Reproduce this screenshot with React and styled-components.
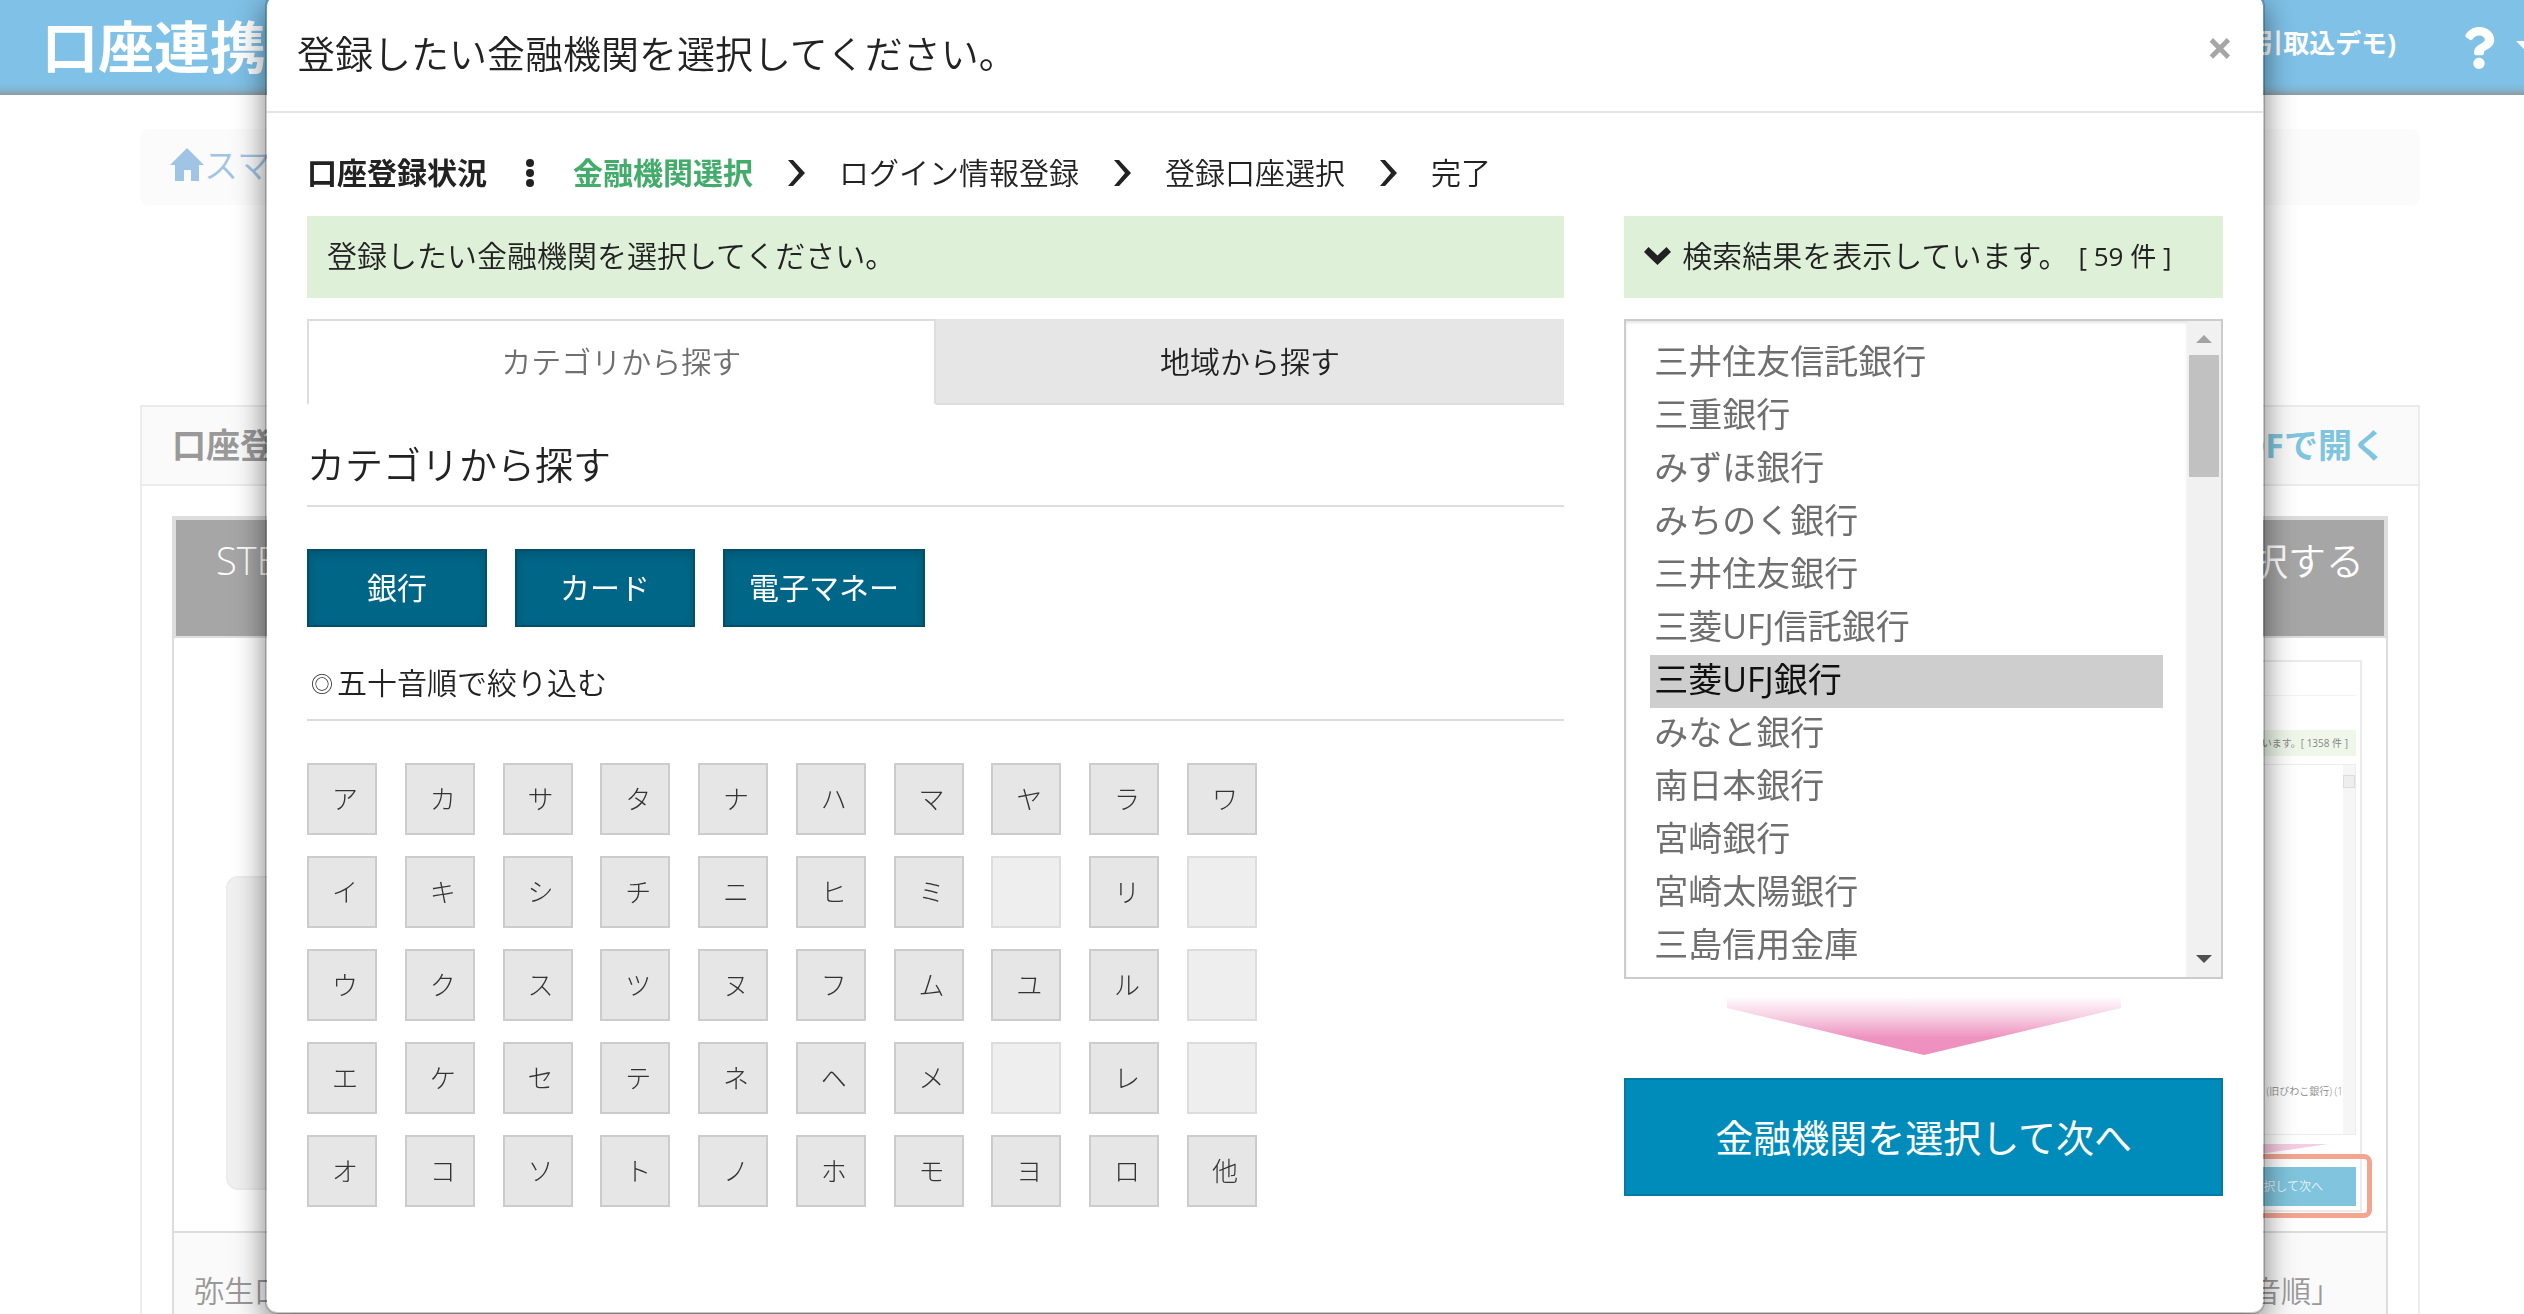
import styled, { createGlobalStyle } from 'styled-components';
import { FaQuestion } from 'react-icons/fa';

const kanaRows = [
  ['ア', 'カ', 'サ', 'タ', 'ナ', 'ハ', 'マ', 'ヤ', 'ラ', 'ワ'],
  ['イ', 'キ', 'シ', 'チ', 'ニ', 'ヒ', 'ミ', '', 'リ', ''],
  ['ウ', 'ク', 'ス', 'ツ', 'ヌ', 'フ', 'ム', 'ユ', 'ル', ''],
  ['エ', 'ケ', 'セ', 'テ', 'ネ', 'ヘ', 'メ', '', 'レ', ''],
  ['オ', 'コ', 'ソ', 'ト', 'ノ', 'ホ', 'モ', 'ヨ', 'ロ', '他'],
];

const banks = [
  '三井住友信託銀行',
  '三重銀行',
  'みずほ銀行',
  'みちのく銀行',
  '三井住友銀行',
  '三菱UFJ信託銀行',
  '三菱UFJ銀行',
  'みなと銀行',
  '南日本銀行',
  '宮崎銀行',
  '宮崎太陽銀行',
  '三島信用金庫',
];

const StepArrow = () => (
  <StepMark>
    <svg width="18" height="28" viewBox="0 0 18 28" fill="#222">
      <path d="M1 1 H6 L18 14 L6 27 H1 L12 14 Z" />
    </svg>
  </StepMark>
);

const Backdrop = () => (
  <Page>
    <TopBar>
      <Logo>口座連携</Logo>
      <TopMenu>
        <UserName>引取込デモ)</UserName>
        <FaQuestion size={42} />
        <Caret />
      </TopMenu>
    </TopBar>
    <Content>
      <Breadcrumb>
        <HomeLink href="#home">
          <svg width="34" height="34" viewBox="0 0 34 34" fill="currentColor">
            <path d="M17 0 L34 17 H29 V33 H21 V22 H14 V33 H5 V17 H0 Z" />
          </svg>
          スマ
        </HomeLink>
      </Breadcrumb>
      <Panel>
        <PanelHead>
          <span>口座登</span>
          <a href="#pdf">PDFで開く</a>
        </PanelHead>
        <StepCard>
          <StepHead>
            <span>STEP</span>
            <span>択する</span>
          </StepHead>
          <StepBody>
            <PlainShot />
            <Shot>
              <ShotHead />
              <ShotBanner>しています。[ 1358 件 ]</ShotBanner>
              <ShotList>
                <ShotListText>(旧びわこ銀行) (1</ShotListText>
                <ShotScroll />
              </ShotList>
              <svg width="218" height="12" viewBox="0 0 218 12">
                <path d="M40 1 H190 L115 12 Z" fill="#f6cde2" />
              </svg>
              <ShotButton>選択して次へ</ShotButton>
              <ShotRing />
            </Shot>
          </StepBody>
          <StepFoot>
            <span>弥生口</span>
            <span>音順」</span>
          </StepFoot>
        </StepCard>
      </Panel>
    </Content>
  </Page>
);

const App = () => {
  return (
    <>
      <GlobalStyle />
      <Backdrop />
      <Overlay>
        <Modal role="dialog" aria-labelledby="modal-title">
          <ModalHead>
            <Title id="modal-title">登録したい金融機関を選択してください。</Title>
            <Close aria-label="閉じる">×</Close>
          </ModalHead>
          <ModalBody>
            <Steps>
              <Step $bold>口座登録状況</Step>
              <StepMark>
                <svg width="8" height="28" viewBox="0 0 8 28" fill="#222">
                  <circle cx="4" cy="4" r="4" />
                  <circle cx="4" cy="14" r="4" />
                  <circle cx="4" cy="24" r="4" />
                </svg>
              </StepMark>
              <Step $bold $current>金融機関選択</Step>
              <StepArrow />
              <Step>ログイン情報登録</Step>
              <StepArrow />
              <Step>登録口座選択</Step>
              <StepArrow />
              <Step>完了</Step>
            </Steps>
            <Columns>
              <div>
                <Banner>登録したい金融機関を選択してください。</Banner>
                <Tabs>
                  <Tab $active>カテゴリから探す</Tab>
                  <Tab>地域から探す</Tab>
                </Tabs>
                <Heading>カテゴリから探す</Heading>
                <Categories>
                  <CategoryButton>銀行</CategoryButton>
                  <CategoryButton>カード</CategoryButton>
                  <CategoryButton>電子マネー</CategoryButton>
                </Categories>
                <SubHeading>
                  <Bullet>◎</Bullet>五十音順で絞り込む
                </SubHeading>
                <KanaGrid>
                  {kanaRows.flat().map((kana, i) => (
                    <KanaButton key={i} disabled={!kana}>{kana}</KanaButton>
                  ))}
                </KanaGrid>
              </div>
              <div>
                <Banner as="label" htmlFor="bank-list">
                  <svg width="27" height="18" viewBox="0 0 27 18" fill="#222">
                    <path d="M4.500 0 L13.500 8.500 L22.500 0 L27 5 L13.500 18 L0 5 Z" />
                  </svg>
                  <span>検索結果を表示しています。</span>
                  <Count>[ 59 件 ]</Count>
                </Banner>
                <ListBox>
                  <BankSelect id="bank-list" size={12} defaultValue="三菱UFJ銀行">
                    {banks.map((bank) => (
                      <option key={bank} value={bank}>{bank}</option>
                    ))}
                  </BankSelect>
                  <ScrollBar>
                    <ScrollUp />
                    <ScrollThumb />
                    <ScrollDown />
                  </ScrollBar>
                </ListBox>
                <PinkArrow width="394" height="57" viewBox="0 0 394 57">
                  <defs>
                    <linearGradient id="pink" x1="0" y1="0" x2="0" y2="1">
                      <stop offset="0" stopColor="#fffafc" />
                      <stop offset="0.3" stopColor="#f7d3e4" />
                      <stop offset="0.7" stopColor="#ee92c0" />
                      <stop offset="1" stopColor="#ee8fbf" />
                    </linearGradient>
                  </defs>
                  <path d="M0 0 H394 V10 L197 57 L0 10 Z" fill="url(#pink)" />
                </PinkArrow>
                <NextButton>金融機関を選択して次へ</NextButton>
              </div>
            </Columns>
          </ModalBody>
        </Modal>
      </Overlay>
    </>
  );
};

const GlobalStyle = createGlobalStyle`
  * {
    box-sizing: border-box;
  }
  body {
    margin: 0;
    background: #fff;
    color: #222;
    font-family: "Open Sans", "Noto Sans CJK JP", sans-serif;
    font-size: 30px;
    font-weight: 350;
    line-height: 40px;
  }
  button, select {
    font-family: inherit;
    font-weight: inherit;
  }
  svg {
    display: block;
    flex: none;
  }
`;

/* page behind the dialog */
const Page = styled.div`
  height: 100vh;
  overflow: hidden;
`;

const TopBar = styled.header`
  display: flex;
  justify-content: space-between;
  height: 95px;
  padding-left: 42px;
  overflow: hidden;
  color: #fff;
  background: linear-gradient(to bottom, #7fc1e7 84px, #84b4d0 90px, #8e9ba3 95px);
`;

const Logo = styled.div`
  font-size: 56px;
  font-weight: 700;
  line-height: 92px;
`;

const TopMenu = styled.div`
  display: flex;
  align-items: center;
  margin-right: -12px;
`;

const UserName = styled.span`
  margin: 0 62px 10px 0;
  font-size: 26px;
  font-weight: 700;
`;

const Caret = styled.span`
  margin: 0 0 4px 16px;
  border: 10px solid transparent;
  border-top-color: #fff;
  border-bottom: 0;
`;

const Content = styled.main`
  padding: 34px 104px 0 140px;
`;

const Breadcrumb = styled.nav`
  height: 76px;
  margin-bottom: 200px;
  padding: 16px 30px;
  border-radius: 8px;
  background: #fbfbfb;
`;

const HomeLink = styled.a`
  display: flex;
  align-items: center;
  color: #a0c4e6;
  font-size: 34px;
  text-decoration: none;
`;

const Panel = styled.section`
  border: 2px solid #ececec;
`;

const PanelHead = styled.div`
  display: flex;
  justify-content: space-between;
  height: 79px;
  padding: 18px 32px 0 30px;
  border-bottom: 2px solid #ececec;
  background: #fafafa;
  color: #999;
  font-size: 34px;
  font-weight: 700;

  a {
    color: #7fc5dd;
    text-decoration: none;
  }
`;

const StepCard = styled.div`
  margin: 30px;
  border: 2px solid #ddd;
`;

const StepHead = styled.div`
  display: flex;
  justify-content: space-between;
  height: 120px;
  padding: 20px 20px 0 40px;
  border: 2px solid #ddd;
  background: #a6a6a6;
  color: #fff;
  font-size: 38px;
`;

const StepBody = styled.div`
  display: flex;
  justify-content: space-between;
  align-items: flex-start;
  height: 593px;
  padding: 22px 24px 0 52px;
`;

const PlainShot = styled.div`
  width: 800px;
  height: 314px;
  margin-top: 216px;
  border: 2px solid #ececec;
  border-radius: 12px;
  background: #f1f1f1;
`;

const Shot = styled.div`
  position: relative;
  display: flex;
  flex-direction: column;
  width: 226px;
  height: 552px;
  padding-right: 4px;
  border: 2px solid #ebebeb;
  color: #888;
  font-size: 10px;
  line-height: 26px;
`;

const ShotHead = styled.div`
  height: 34px;
  margin-bottom: 34px;
  border-bottom: 1px solid #f3f3f3;
`;

const ShotBanner = styled.div`
  height: 26px;
  margin-bottom: 8px;
  padding-right: 8px;
  background: #eef7ea;
  font-weight: 400;
  text-align: right;
`;

const ShotList = styled.div`
  display: flex;
  align-items: stretch;
  height: 371px;
  margin-bottom: 8px;
  border: 1px solid #ececec;
`;

const ShotListText = styled.div`
  flex: 1;
  align-self: flex-end;
  padding-bottom: 30px;
  text-align: right;
`;

const ShotScroll = styled.div`
  width: 12px;
  padding-top: 10px;
  background: #f6f6f6;

  &::before {
    content: '';
    display: block;
    height: 11px;
    border: 1px solid #ddd;
    background: #eee;
  }
`;

const ShotButton = styled.div`
  height: 39px;
  margin-top: 12px;
  padding-right: 33px;
  background: #80c5dd;
  color: #e6f4f9;
  font-size: 12px;
  line-height: 39px;
  text-align: right;
`;

const ShotRing = styled.div`
  position: absolute;
  right: -12px;
  bottom: -8px;
  width: 220px;
  height: 64px;
  border: 5px solid #f4a590;
  border-radius: 8px;
`;

const StepFoot = styled.div`
  display: flex;
  justify-content: space-between;
  padding: 38px 45px 60px 20px;
  border-top: 2px solid #ddd;
  background: #fafafa;
  color: #999;
`;

/* dialog, scrolled a little past its top edge */
const Overlay = styled.div`
  position: fixed;
  inset: -6px 0 0;
  padding: 0 259px 0 265px;
  overflow: hidden;
`;

const Modal = styled.div`
  border: 2px solid rgba(0, 0, 0, 0.2);
  border-radius: 12px;
  background: #fff;
  background-clip: padding-box;
  box-shadow: 0 10px 30px rgba(0, 0, 0, 0.5);
`;

const ModalHead = styled.div`
  display: flex;
  justify-content: space-between;
  align-items: center;
  height: 117px;
  padding: 0 30px 1px;
  border-bottom: 2px solid #e5e5e5;
`;

const Title = styled.h1`
  margin: 0;
  font-size: 38px;
  font-weight: 350;
`;

const Close = styled.button`
  margin-bottom: 12px;
  padding: 0;
  border: 0;
  background: none;
  color: #a6a6a6;
  font-size: 46px;
  font-weight: 700;
  line-height: 40px;
`;

const ModalBody = styled.div`
  padding: 40px 40px 105px;
`;

const Steps = styled.div`
  display: flex;
  align-items: center;
  margin-bottom: 23px;
`;

const Step = styled.span`
  color: ${({ $current }) => ($current ? '#43ac6a' : '#222')};
  font-weight: ${({ $bold }) => ($bold ? 700 : 350)};
`;

const StepMark = styled.span`
  display: flex;
  justify-content: center;
  width: 86px;
`;

const Columns = styled.div`
  display: grid;
  grid-template-columns: 21fr 10fr;
  gap: 60px;
`;

const Banner = styled.div`
  display: flex;
  align-items: center;
  height: 82px;
  margin-bottom: 21px;
  padding: 0 20px 2px;
  background: #dff0d8;
  white-space: nowrap;

  svg {
    margin-right: 11px;
  }
`;

const Count = styled.span`
  margin-left: 10px;
  font-size: 26px;
  font-weight: 400;
`;

const Tabs = styled.div`
  display: flex;
  height: 86px;
`;

const Tab = styled.button`
  width: 50%;
  padding: 0 0 4px;
  border: 2px solid ${({ $active }) => ($active ? '#ddd' : '#e6e6e6')};
  border-bottom-color: ${({ $active }) => ($active ? '#fff' : '#ddd')};
  border-right-width: ${({ $active }) => ($active ? '2px' : '0')};
  border-left-width: ${({ $active }) => ($active ? '2px' : '0')};
  background: ${({ $active }) => ($active ? '#fff' : '#e6e6e6')};
  color: ${({ $active }) => ($active ? '#6f6f6f' : '#222')};
  font-size: 30px;
`;

const Heading = styled.h2`
  margin: 37px 0 42px;
  padding-bottom: 19px;
  border-bottom: 2px solid #ddd;
  font-size: 38px;
  font-weight: 350;
  line-height: 44px;
`;

const Categories = styled.div`
  display: flex;
  gap: 28px;
`;

const CategoryButton = styled.button`
  min-width: 180px;
  height: 78px;
  padding: 0 24px 4px;
  border: 2px solid #004f68;
  background: #006687;
  box-shadow: inset 0 4px 10px rgba(0, 0, 0, 0.15);
  color: #fff;
  font-size: 30px;
  font-weight: 400;
`;

const SubHeading = styled.h3`
  display: flex;
  margin: 36px 0 42px;
  padding-bottom: 16px;
  border-bottom: 2px solid #ddd;
  font-size: 30px;
  font-weight: 350;
`;

const Bullet = styled.span`
  width: 30px;
  font-size: 22px;
  text-align: center;
`;

const KanaGrid = styled.div`
  display: grid;
  grid-template-columns: repeat(10, 70px);
  justify-content: space-between;
  row-gap: 21px;
  max-width: 950px;
`;

const KanaButton = styled.button`
  height: 72px;
  padding: 0 0 2px 6px;
  border: 2px solid #ccc;
  background: #e6e6e6;
  color: #333;
  font-size: 26px;
  font-weight: 300;

  &:disabled {
    border-color: #ddd;
    background: #eee;
  }
`;

const ListBox = styled.div`
  display: flex;
  height: 660px;
  border: 2px solid #ccc;
`;

const BankSelect = styled.select`
  flex: 1;
  padding: 16px 24px 0;
  border: 0;
  border-radius: 0;
  outline: 0;
  overflow: hidden;
  background: #fff;
  box-shadow: inset 0 2px 3px rgba(0, 0, 0, 0.1);
  color: #6f6f6f;
  font-size: 34px;
  scrollbar-width: none;

  option {
    display: flex;
    align-items: center;
    height: 53px;
    padding: 0 4px 9px;
    font-weight: 400;
  }
`;

const ScrollBar = styled.div`
  display: flex;
  flex-direction: column;
  align-items: center;
  width: 34px;
  padding: 14px 0;
  background: #f1f1f1;
`;

const ScrollUp = styled.span`
  border: 8px solid transparent;
  border-top: 0;
  border-bottom-color: #a3a3a3;
`;

const ScrollThumb = styled.span`
  width: 30px;
  height: 122px;
  margin: 12px 0 auto;
  background: #c1c1c1;
`;

const ScrollDown = styled.span`
  border: 8px solid transparent;
  border-top-color: #505050;
  border-bottom: 0;
`;

const PinkArrow = styled.svg`
  margin: 19px auto 23px;
`;

const NextButton = styled.button`
  width: 100%;
  height: 118px;
  padding: 0 0 4px;
  border: 2px solid #007ba3;
  background: #008cba;
  color: #fff;
  font-size: 38px;
  font-weight: 400;
`;

export default App;
